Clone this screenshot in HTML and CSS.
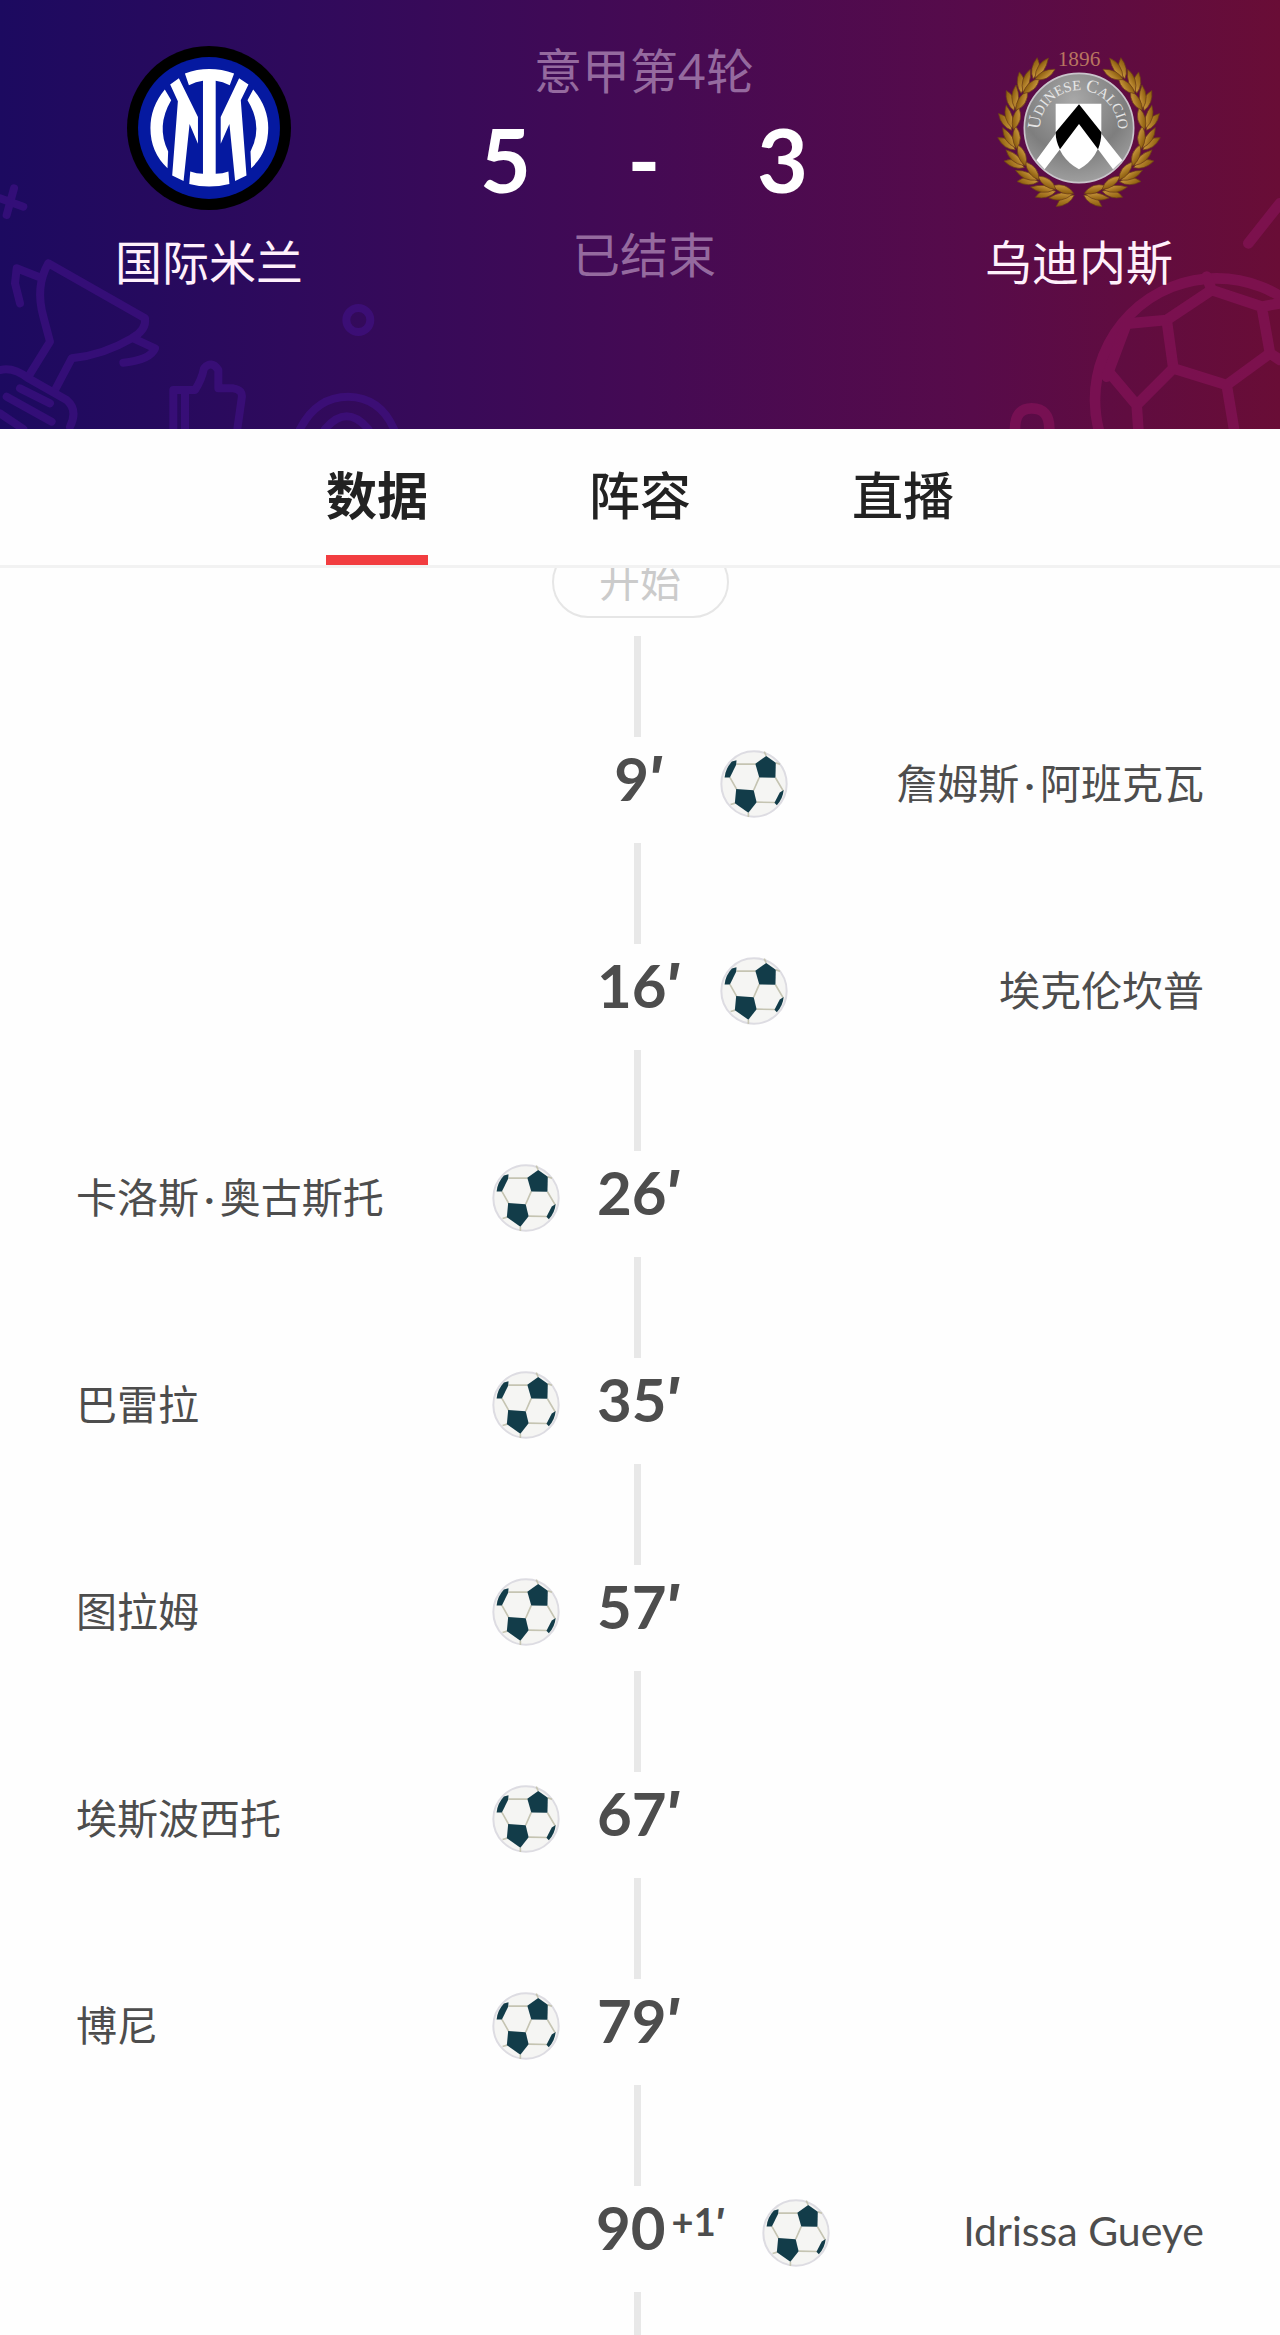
FILE: index.html
```html
<!DOCTYPE html>
<html lang="zh-CN">

<head>
    <meta charset="UTF-8">
    <meta name="viewport" content="width=device-width, initial-scale=1.0">
    <title>国际米兰 5 - 3 乌迪内斯</title>
    <link rel="stylesheet" href="styles.css">
</head>

<body>
    <svg class="sprite" aria-hidden="true">
        <symbol id="ball" viewBox="26 29 206 206">
            <circle cx="129" cy="132" r="99" fill="#f5f5f3" stroke="#dddce2" stroke-width="6" />
            <g fill="none" stroke="#c5c4b2" stroke-width="5">
                <path d="M76 72H134M56 112L77 149M145 112L128 151M194 113L217 152M137 187L194 188" />
                <path d="M72 190L58 194M112 219V232M166 47L160 34M195 68L208 72" />
            </g>
            <g fill="#123c49">
                <path d="M166 47L195 68L194 113L145 112L133 71Z" />
                <path d="M75 147L128 151L137 187L112 219L71 190Z" />
                <path d="M40 112L56 112L75 74L76 60L62 64Q42 86 40 112Z" />
                <path d="M219 150L207 158L191 189L198 196Q216 178 219 150Z" />
            </g>
        </symbol>
    </svg>

    <header class="header">
        <svg class="header__bg header__bg--left" viewBox="0 0 1380 807" aria-hidden="true">
            <path d="M42 85L20 165M0 115L70 140" />
            <path d="M60 430L45 370L50 325L115 350M145 310L435 475Q440 510 395 535Q310 585 215 595L165 690M145 310Q105 380 130 470L150 545L85 650M400 535L465 565Q450 600 370 608" />
            <path d="M0 630Q40 620 85 655L200 720Q235 750 210 800M60 685L150 730M20 710L155 785M0 760L70 807" />
            <path d="M520 807V690H585Q605 660 612 625Q635 600 655 630V685H700Q730 690 725 715L712 807M555 695V807" />
            <circle cx="1075" cy="480" r="36" />
            <path d="M900 807Q950 710 1045 710Q1140 712 1182 807M975 807Q1040 730 1105 807" />
        </svg>
        <svg class="header__bg header__bg--right" viewBox="0 0 960 807" aria-hidden="true">
            <path d="M865 250L960 130" />
            <path d="M165 807Q165 745 215 745Q268 745 268 807" />
            <circle cx="770" cy="720" r="365" />
            <path d="M740 350L755 390L620 480L510 490M755 390L905 440L960 430M905 440L930 580L800 675L640 625L620 480M930 580L960 600M800 675L822 807M640 625L530 735L450 640M530 735L535 807M500 490L440 650" />
        </svg>

        <div class="team">
            <svg class="team__logo" viewBox="80 50 490 490" role="img" aria-label="国际米兰">
                <circle cx="325" cy="295" r="245" fill="#000" />
                <circle cx="325" cy="295" r="212" fill="#0519a0" />
                <g fill="#fff">
                    <path d="M253 132Q325 106 400 132L387 167Q366 156 345 154V432Q366 432 383 425L386 462Q325 478 266 462L269 425Q288 432 307 432V154Q286 156 265 167Z" />
                    <path d="M193 180L212 212Q166 290 203 365L201 415Q150 368 150 295Q150 232 193 180Z" />
                    <path d="M457 180L440 212Q488 290 449 365L451 415Q502 368 502 295Q502 232 457 180Z" />
                    <path d="M209 165L235 146L292 262V342L267 283L249 453L215 437L232 215Z" />
                    <path d="M415 146L443 165L420 212L437 437L403 453L386 283L360 342V262Z" />
                </g>
            </svg>
            <h2 class="team__name">国际米兰</h2>
        </div>

        <div class="result">
            <p class="result__note">意甲第4轮</p>
            <div class="result__score">
                <span>5</span>
                <span>-</span>
                <span>3</span>
            </div>
            <p class="result__note">已结束</p>
        </div>

        <div class="team">
            <svg class="team__logo" viewBox="-246 -246 492 492" role="img" aria-label="乌迪内斯">
                <defs>
                    <radialGradient id="silver" cx="0.45" cy="0.25" r="0.8">
                        <stop offset="0" stop-color="#a8a8a8" />
                        <stop offset="0.6" stop-color="#7e7e7e" />
                        <stop offset="1" stop-color="#a5a5a5" />
                    </radialGradient>
                    <linearGradient id="gold" x1="0" y1="0" x2="0" y2="1">
                        <stop offset="0" stop-color="#c8953c" />
                        <stop offset="1" stop-color="#8a5c0c" />
                    </linearGradient>
                    <path id="arc" d="M-118 5A118 118 0 1 1 118 5" />
                    <g id="sprig" fill="url(#gold)" stroke="#6a3c18" stroke-width="2">
                        <path d="M0 202Q-12 234 -52 240Q-42 202 0 202Z" />
                        <path d="M-6 200Q-38 188 -76 216Q-36 230 -6 200Z" />
                        <path d="M-2 197Q-26 164 -68 178Q-38 208 -2 197Z" />
                    </g>
                    <g id="branch">
                        <use href="#sprig" transform="rotate(4)" />
                        <use href="#sprig" transform="rotate(20)" />
                        <use href="#sprig" transform="rotate(37)" />
                        <use href="#sprig" transform="rotate(54)" />
                        <use href="#sprig" transform="rotate(71)" />
                        <use href="#sprig" transform="rotate(88)" />
                        <use href="#sprig" transform="rotate(105)" />
                        <use href="#sprig" transform="rotate(121)" />
                        <use href="#sprig" transform="rotate(137)" />
                    </g>
                </defs>
                <use href="#branch" />
                <use href="#branch" transform="scale(-1 1)" />
                <circle r="164" fill="url(#silver)" stroke="#c9c5cb" stroke-width="5" />
                <path d="M-70 17L-128 97L-103 124L-57 64ZM67 17L130 97L102 124L57 64Z" fill="#fff" />
                <path d="M-70 -73H67V17Q62 88 0 124Q-64 88 -70 17Z" fill="#fff" />
                <path d="M0 -71L67 13Q67 40 57 64L0 -12L-57 64Q-70 40 -70 13Z" fill="#000" />
                <text class="crest-year" y="-186" text-anchor="middle">1896</text>
                <text class="crest-name">
                    <textPath href="#arc" startOffset="50%" text-anchor="middle"><tspan class="crest-name__cap">U</tspan>DINESE <tspan class="crest-name__cap">C</tspan>ALCIO</textPath>
                </text>
            </svg>
            <h2 class="team__name">乌迪内斯</h2>
        </div>
    </header>

    <nav class="tabs">
        <button class="tabs__btn active" type="button">数据</button>
        <button class="tabs__btn" type="button">阵容</button>
        <button class="tabs__btn" type="button">直播</button>
    </nav>

    <main class="main">
        <p class="start">开始</p>
        <ol class="timeline">
            <li class="event">
                <div class="event__side event__side--home"></div>
                <div class="event__time">9<span class="event__mark">′</span></div>
                <div class="event__side event__side--away">
                    <svg class="event__ball" role="img" aria-label="进球"><use href="#ball" /></svg>
                    <span class="event__name">詹姆斯<span class="event__dot">·</span>阿班克瓦</span>
                </div>
            </li>
            <li class="event">
                <div class="event__side event__side--home"></div>
                <div class="event__time">16<span class="event__mark">′</span></div>
                <div class="event__side event__side--away">
                    <svg class="event__ball" role="img" aria-label="进球"><use href="#ball" /></svg>
                    <span class="event__name">埃克伦坎普</span>
                </div>
            </li>
            <li class="event">
                <div class="event__side event__side--home">
                    <span class="event__name">卡洛斯<span class="event__dot">·</span>奥古斯托</span>
                    <svg class="event__ball" role="img" aria-label="进球"><use href="#ball" /></svg>
                </div>
                <div class="event__time">26<span class="event__mark">′</span></div>
            </li>
            <li class="event">
                <div class="event__side event__side--home">
                    <span class="event__name">巴雷拉</span>
                    <svg class="event__ball" role="img" aria-label="进球"><use href="#ball" /></svg>
                </div>
                <div class="event__time">35<span class="event__mark">′</span></div>
            </li>
            <li class="event">
                <div class="event__side event__side--home">
                    <span class="event__name">图拉姆</span>
                    <svg class="event__ball" role="img" aria-label="进球"><use href="#ball" /></svg>
                </div>
                <div class="event__time">57<span class="event__mark">′</span></div>
            </li>
            <li class="event">
                <div class="event__side event__side--home">
                    <span class="event__name">埃斯波西托</span>
                    <svg class="event__ball" role="img" aria-label="进球"><use href="#ball" /></svg>
                </div>
                <div class="event__time">67<span class="event__mark">′</span></div>
            </li>
            <li class="event">
                <div class="event__side event__side--home">
                    <span class="event__name">博尼</span>
                    <svg class="event__ball" role="img" aria-label="进球"><use href="#ball" /></svg>
                </div>
                <div class="event__time">79<span class="event__mark">′</span></div>
            </li>
            <li class="event">
                <div class="event__side event__side--home"></div>
                <div class="event__time">90<span class="event__extra">+1<span class="event__mark">′</span></span></div>
                <div class="event__side event__side--away">
                    <svg class="event__ball" role="img" aria-label="进球"><use href="#ball" /></svg>
                    <span class="event__name">Idrissa Gueye</span>
                </div>
            </li>
            <li class="event"></li>
        </ol>
    </main>
</body>

</html>
```
FILE: styles.css
```css
* {
    padding: 0;
    margin: 0;
    box-sizing: border-box;
}

body {
    display: flex;
    flex-direction: column;
    height: 100vh;
    overflow: hidden;
    font-family: Lato, 'Noto Sans CJK SC', sans-serif;
    font-size: 41px;
    color: #4d4d4d;
    background-color: #fefefe;
}

.sprite {
    display: none;
}

/* header */

.header {
    position: relative;
    display: flex;
    justify-content: space-between;
    flex-shrink: 0;
    padding: 46px 106px 139px 114px;
    color: #fff0fb;
    background: linear-gradient(90deg, #1c0a60 0%, #2f0a5c 23%, #440a54 50%, #570b4a 76%, #690d36 100%);
}

.header__bg {
    position: absolute;
    bottom: 0;
    height: 269px;
    fill: none;
    stroke-width: 24;
    stroke-linejoin: round;
    stroke-linecap: round;
    overflow: hidden;
}

.header__bg--left {
    left: 0;
    width: 460px;
    stroke: #421188;
    opacity: 0.6;
}

.header__bg--right {
    right: 0;
    width: 320px;
    stroke: #8a145c;
    stroke-width: 32;
    opacity: 0.6;
}

.team {
    position: relative;
    display: flex;
    flex-direction: column;
    align-items: center;
    gap: 24px;
    width: 190px;
}

.team__logo {
    width: 164px;
    height: 164px;
    overflow: visible;
}

.team__name {
    font-size: 47px;
    font-weight: 400;
    line-height: 56px;
    white-space: nowrap;
}

.crest-year {
    font-family: 'Liberation Serif', serif;
    font-size: 64px;
    fill: #b87560;
}

.crest-name {
    font-family: 'Liberation Serif', serif;
    font-size: 43px;
    fill: #e6e6e6;
}

.crest-name__cap {
    font-size: 54px;
}

.result {
    position: relative;
    display: flex;
    flex-direction: column;
    align-items: center;
    gap: 20px;
    width: 328px;
    padding-top: 1px;
}

.result__note {
    font-size: 48px;
    line-height: 48px;
    color: #956a9f;
}

.result__score {
    display: flex;
    justify-content: space-between;
    width: 100%;
    padding-bottom: 8px;
    font-size: 88px;
    font-weight: 700;
    line-height: 88px;
    color: #fff;
}

/* tabs */

.tabs {
    display: flex;
    justify-content: center;
    flex-shrink: 0;
    gap: 161px;
    border-bottom: 3px solid #f2f2f2;
}

.tabs__btn {
    padding-top: 8px;
    border: none;
    border-bottom: 10px solid transparent;
    background: none;
    color: #222;
    font-family: inherit;
    font-size: 51px;
    font-weight: 500;
    line-height: 118px;
    cursor: pointer;
}

.tabs__btn.active {
    border-color: #f23d40;
    font-weight: 700;
}

/* timeline, scrolled a little under the tabs */

.main {
    flex: 1;
    min-height: 0;
    overflow: hidden;
}

.start {
    width: 177px;
    margin: -22px auto 18px;
    border: 2px solid #e6e6e6;
    border-radius: 36px;
    color: #cbcbcb;
    line-height: 68px;
    text-align: center;
}

.timeline {
    list-style: none;
}

.event {
    display: flex;
    flex-wrap: wrap;
    align-items: center;
}

.event::before {
    content: '';
    width: 7px;
    height: 101px;
    margin: 0 calc(50% - 1px) 0 calc(50% - 6px);
    background-color: #e8e8e8;
}

.event__side {
    display: flex;
    align-items: center;
    justify-content: space-between;
    height: 106px;
    padding-bottom: 12px;
}

.event__side--home {
    width: calc(50% - 63px);
    padding-left: 76px;
    padding-right: 17px;
}

.event__side--away {
    flex: 1;
    padding-left: 17px;
    padding-right: 76px;
}

.event__ball {
    width: 68px;
    height: 68px;
}

.event__name {
    padding-bottom: 6px;
}

.event__dot {
    margin: 0 5px;
}

.event__time {
    display: flex;
    justify-content: center;
    min-width: 126px;
    height: 106px;
    padding: 0 19px;
    font-size: 60px;
    font-weight: 700;
    line-height: 82px;
}

.event__mark {
    font-family: Inter, sans-serif;
}

.event__extra {
    margin-left: 6px;
    font-size: 38px;
    line-height: 70px;
}
```
